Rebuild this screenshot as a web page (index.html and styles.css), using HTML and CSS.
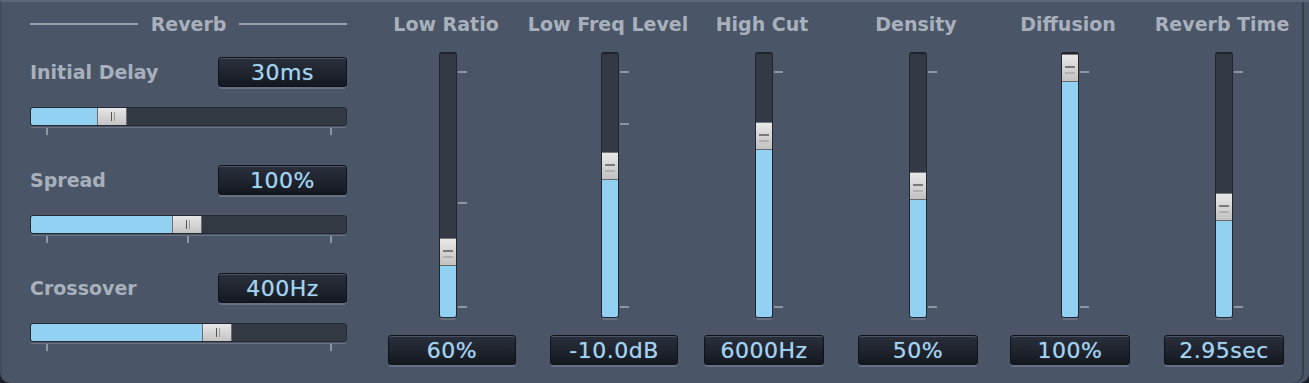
FILE: index.html
```html
<!DOCTYPE html>
<html lang="en">
<head>
    <meta charset="UTF-8">
    <title>Reverb</title>
    <link rel="stylesheet" href="styles.css">
</head>
<body>
    <div class="panel">
        <section class="reverb">
            <div class="heading">Reverb</div>

            <div class="hgroup">
                <div class="hrow">
                    <span class="label">Initial Delay</span>
                    <span class="value">30ms</span>
                </div>
                <div class="htrack">
                    <div class="hfill" style="width: 66px;"></div>
                    <div class="hthumb"></div>
                </div>
                <div class="hscale">
                    <i style="left: 15px;"></i>
                    <i style="left: 299px;"></i>
                </div>
            </div>

            <div class="hgroup">
                <div class="hrow">
                    <span class="label">Spread</span>
                    <span class="value">100%</span>
                </div>
                <div class="htrack">
                    <div class="hfill" style="width: 141px;"></div>
                    <div class="hthumb"></div>
                </div>
                <div class="hscale">
                    <i style="left: 15px;"></i>
                    <i style="left: 156px;"></i>
                    <i style="left: 299px;"></i>
                </div>
            </div>

            <div class="hgroup">
                <div class="hrow">
                    <span class="label">Crossover</span>
                    <span class="value">400Hz</span>
                </div>
                <div class="htrack">
                    <div class="hfill" style="width: 171px;"></div>
                    <div class="hthumb"></div>
                </div>
                <div class="hscale">
                    <i style="left: 15px;"></i>
                    <i style="left: 299px;"></i>
                </div>
            </div>
        </section>

        <section class="faders">
            <div class="fader w1">
                <div class="label">Low Ratio</div>
                <div class="vtrack">
                    <div class="vfill" style="height: 51px;"></div>
                    <div class="vthumb"></div>
                    <i style="top: 17px;"></i>
                    <i style="top: 148px;"></i>
                    <i style="top: 252px;"></i>
                </div>
                <div class="value wide">60%</div>
            </div>
            <div class="fader w2">
                <div class="label">Low Freq Level</div>
                <div class="vtrack">
                    <div class="vfill" style="height: 137px;"></div>
                    <div class="vthumb"></div>
                    <i style="top: 17px;"></i>
                    <i style="top: 69px;"></i>
                    <i style="top: 252px;"></i>
                </div>
                <div class="value wide">-10.0dB</div>
            </div>
            <div class="fader w3">
                <div class="label">High Cut</div>
                <div class="vtrack">
                    <div class="vfill" style="height: 167px;"></div>
                    <div class="vthumb"></div>
                    <i style="top: 17px;"></i>
                    <i style="top: 252px;"></i>
                </div>
                <div class="value">6000Hz</div>
            </div>
            <div class="fader w4">
                <div class="label">Density</div>
                <div class="vtrack">
                    <div class="vfill" style="height: 117px;"></div>
                    <div class="vthumb"></div>
                    <i style="top: 17px;"></i>
                    <i style="top: 252px;"></i>
                </div>
                <div class="value">50%</div>
            </div>
            <div class="fader w5">
                <div class="label">Diffusion</div>
                <div class="vtrack">
                    <div class="vfill" style="height: 235px;"></div>
                    <div class="vthumb"></div>
                    <i style="top: 17px;"></i>
                    <i style="top: 252px;"></i>
                </div>
                <div class="value">100%</div>
            </div>
            <div class="fader w6">
                <div class="label">Reverb Time</div>
                <div class="vtrack">
                    <div class="vfill" style="height: 96px;"></div>
                    <div class="vthumb"></div>
                    <i style="top: 17px;"></i>
                    <i style="top: 252px;"></i>
                </div>
                <div class="value">2.95sec</div>
            </div>
        </section>
    </div>
</body>
</html>
```

FILE: styles.css
```css
* {
    margin: 0;
    padding: 0;
    box-sizing: border-box;
}

body {
    background: #1c2026;
    font-family: 'DejaVu Sans', Verdana, sans-serif;
    width: 1309px;
    height: 383px;
    overflow: hidden;
}

.panel {
    width: 1309px;
    height: 383px;
    background: #4a5567;
    border-top: 2px solid #5d6779;
    border-left: 2px solid #434d5e;
    border-radius: 0 0 10px 10px;
    box-shadow: inset -5px 0 0 #4a5567, inset -7px 0 0 #363e4b;
    display: flex;
    padding: 11px 0 0 28px;
    overflow: hidden;
}

.label {
    color: #a8b0bc;
    font-size: 19px;
    font-weight: bold;
    line-height: 22px;
    white-space: nowrap;
}

.value {
    width: 129px;
    height: 30px;
    background: linear-gradient(#2a303c, #141820);
    border: 1px solid #0f1218;
    border-radius: 3px;
    box-shadow: inset 0 1px 0 #4a5263, 0 3px 0 -1px #687183;
    color: #a2d3f1;
    font-size: 22px;
    letter-spacing: 0.5px;
    line-height: 30px;
    text-align: center;
    white-space: nowrap;
    text-shadow: 0 0 1px rgba(162, 211, 241, 0.6);
}

/* left block */
.reverb {
    width: 317px;
    flex-shrink: 0;
}

.heading {
    display: flex;
    align-items: center;
    gap: 13px;
    color: #a8b0bc;
    font-size: 19px;
    font-weight: bold;
    line-height: 22px;
    margin-bottom: 22px;
}

.heading::before,
.heading::after {
    content: "";
    flex: 1;
    height: 2px;
    background: #98a1ad;
}

.hgroup {
    margin-bottom: 30px;
}

.hrow {
    display: flex;
    justify-content: space-between;
    align-items: center;
    margin-bottom: 20px;
}

.htrack {
    height: 19px;
    background: #323943;
    border: 1px solid #252a32;
    border-radius: 3px;
    display: flex;
}

.hfill {
    background: #93d1f3;
    border-radius: 2px 0 0 2px;
}

.hthumb {
    width: 30px;
    background: linear-gradient(#e6e6e6, #c4c4c4);
    border-left: 1px solid #6d6d6d;
    border-right: 1px solid #6d6d6d;
    position: relative;
}

.hthumb::after {
    content: "";
    position: absolute;
    left: 13px;
    top: 4px;
    width: 2px;
    height: 9px;
    border-left: 1px solid #555;
    border-right: 1px solid #999;
}

.hscale {
    position: relative;
    height: 8px;
    border-top: 1px solid #6b7485;
    margin: 1px 1px 0;
}

.hscale i {
    position: absolute;
    top: 0;
    width: 2px;
    height: 7px;
    background: #8e97a4;
}

/* vertical faders */
.faders {
    display: flex;
    flex-shrink: 0;
    margin-left: 39px;
}

.fader {
    display: flex;
    flex-direction: column;
    align-items: center;
    flex-shrink: 0;
}

.w1 { width: 124px; }
.w2 { width: 200px; }
.w3 { width: 108px; }
.w4 { width: 200px; }
.w5 { width: 104px; }
.w6 { width: 204px; }

.fader .label {
    margin-left: -4px;
}

.vtrack {
    position: relative;
    width: 18px;
    height: 266px;
    margin: 17px 0 17px;
    background: #333a45;
    border: 1px solid #232830;
    border-top: 2px solid #1f232a;
    border-radius: 3px;
    box-shadow: 0 3px 0 -1px #687183;
    display: flex;
    flex-direction: column-reverse;
}

.vfill {
    background: #93d1f3;
    border-radius: 0 0 2px 2px;
}

.vthumb {
    height: 28px;
    background: linear-gradient(#e8e8e8, #c2c2c2);
    border-top: 1px solid #777;
    border-bottom: 1px solid #6a6a6a;
    position: relative;
}

.vthumb::after {
    content: "";
    position: absolute;
    left: 3px;
    right: 3px;
    top: 11px;
    height: 4px;
    border-top: 2px solid #7a7a7a;
    border-bottom: 2px solid #b0b0b0;
}

.vtrack i {
    position: absolute;
    left: 18px;
    width: 9px;
    height: 2px;
    background: #8c95a2;
}

.fader .value {
    width: 120px;
}

.fader .value.wide {
    width: 128px;
    margin-left: 8px;
}
```
